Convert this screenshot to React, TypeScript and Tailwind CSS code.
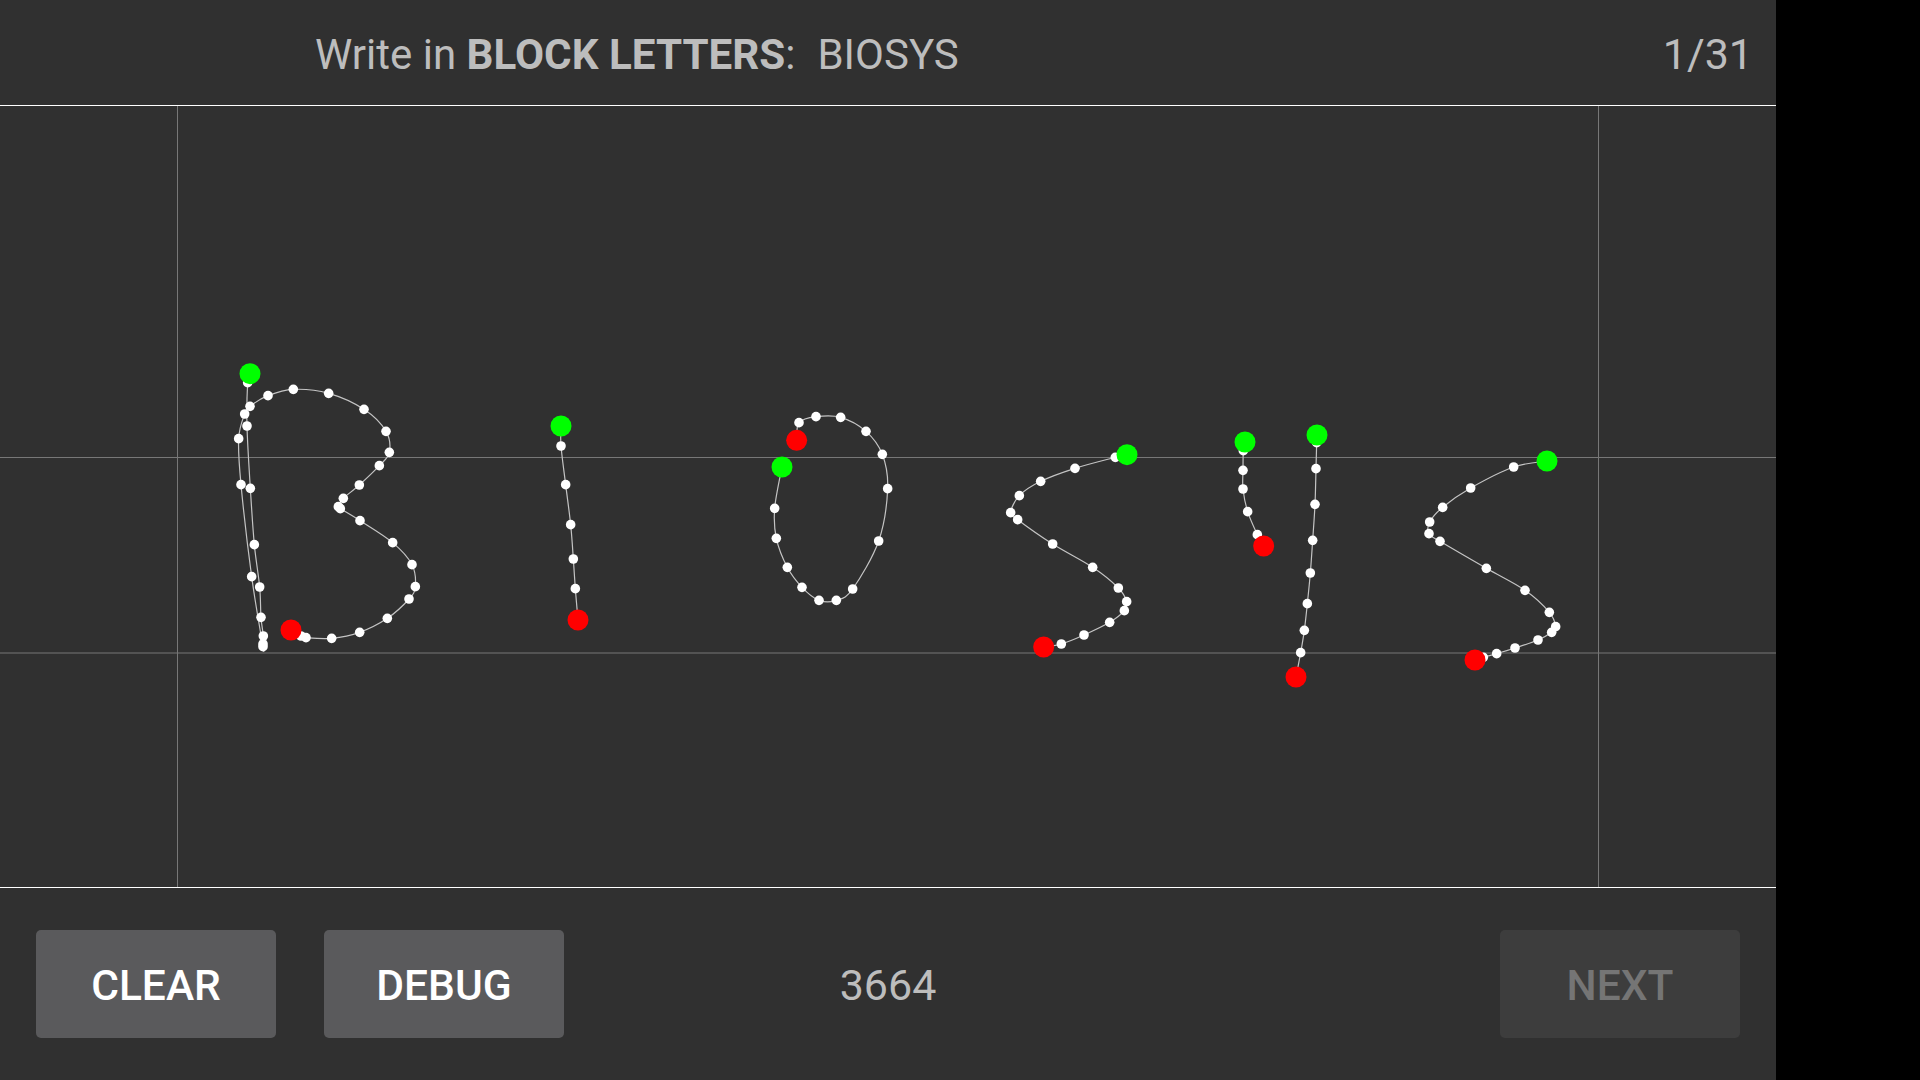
const strokes = [
  // B
  {
    ox: 200,
    oy: 340,
    pts: [
      [150, 101], [143, 128], [141, 258], [151, 445], [163, 614], [179, 741], [183, 832], [190, 888], [189, 912], [189, 920],
      [155, 710], [123, 434], [116, 296], [134, 222], [150, 199], [204, 167], [280, 148], [386, 160], [492, 208], [558, 274],
      [568, 337], [538, 377], [478, 435], [430, 475], [415, 500], [421, 506], [480, 542], [578, 608], [636, 674], [646, 740],
      [627, 777], [562, 835], [479, 877], [395, 895], [318, 893], [303, 888], [273, 870],
    ],
  },
  // I
  { ox: 530, oy: 390, pts: [[93, 108], [93, 168], [107, 284], [122, 404], [130, 507], [136, 596], [144, 690]] },
  // O
  {
    ox: 530,
    oy: 390,
    pts: [
      [756, 231], [734, 355], [739, 445], [772, 532], [816, 592], [867, 631], [919, 631], [968, 597], [1046, 453], [1073, 296],
      [1057, 193], [1008, 124], [932, 82], [858, 80], [807, 98], [800, 151],
    ],
  },
  // S
  {
    ox: 980,
    oy: 420,
    pts: [
      [441, 104], [406, 112], [285, 145], [182, 184], [118, 227], [92, 278], [113, 299], [218, 372], [338, 442], [415, 504],
      [440, 545], [433, 572], [389, 607], [312, 645], [244, 672], [191, 681],
    ],
  },
  // Y
  { ox: 1200, oy: 410, pts: [[135, 96], [130, 122], [129, 181], [129, 237], [143, 305], [172, 374], [191, 408]] },
  {
    ox: 1200,
    oy: 410,
    pts: [[351, 75], [350, 98], [348, 176], [345, 283], [338, 391], [331, 489], [322, 581], [313, 661], [302, 728], [288, 801]],
  },
  // S
  {
    ox: 1200,
    oy: 410,
    pts: [
      [1041, 153], [941, 171], [812, 234], [728, 292], [689, 336], [687, 371], [720, 394], [859, 475], [975, 541], [1048, 607],
      [1067, 650], [1055, 667], [1014, 690], [945, 714], [890, 731], [850, 742], [825, 750],
    ],
  },
].map((s) => s.pts.map(([x, y]) => [s.ox + x / 3, s.oy + y / 3]));

// catmull-rom through the sampled points
const toPath = (p: number[][]) => {
  let d = `M${p[0][0]} ${p[0][1]}`;
  for (let i = 0; i < p.length - 1; i++) {
    const a = p[Math.max(i - 1, 0)];
    const b = p[i];
    const c = p[i + 1];
    const e = p[Math.min(i + 2, p.length - 1)];
    d += ` C${b[0] + (c[0] - a[0]) / 6} ${b[1] + (c[1] - a[1]) / 6} ${c[0] - (e[0] - b[0]) / 6} ${c[1] - (e[1] - b[1]) / 6} ${c[0]} ${c[1]}`;
  }
  return d;
};

const Button = ({ text, disabled }: { text: string; disabled?: boolean }) => (
  <div
    className={`w-[240px] h-[108px] pt-[4px] rounded-[5px] flex items-center justify-center text-[42.5px] font-medium ${
      disabled ? "bg-[#3d3d3d] text-[#757575]" : "bg-[#5a5a5c] text-white"
    }`}
  >
    {text}
  </div>
);

const App = () => {
  return (
    <div className="w-[1920px] h-[1080px] bg-black overflow-hidden font-['Roboto',sans-serif]">
      <div className="w-[1776px] h-full bg-[#303030] flex flex-col">
        <div className="h-[106px] shrink-0 border-b border-white pt-[4px] pl-[315px] pr-[23px] flex items-center justify-between text-[42px] text-[#bdbdbd]">
          <div className="flex">
            <span>
              Write in <b className="font-bold text-[42.2px]">BLOCK LETTERS</b>:
            </span>
            <span className="ml-[22px]">BIOSYS</span>
          </div>
          <span className="text-[43px]">1/31</span>
        </div>

        <div className="flex-1 min-h-0">
          <svg className="block w-full h-full" viewBox="0 106 1776 781">
            <g stroke="#777777" strokeWidth="1" fill="none">
              <line x1="177.5" y1="106" x2="177.5" y2="887" />
              <line x1="1598.5" y1="106" x2="1598.5" y2="887" />
              <line x1="0" y1="457.5" x2="1776" y2="457.5" />
              <line x1="0" y1="653" x2="1776" y2="653" />
            </g>
            {strokes.map((p, i) => (
              <g key={i}>
                <path d={toPath(p)} fill="none" stroke="#c4c4c4" strokeWidth="1.2" />
                {p.slice(1, -1).map(([x, y], j) => (
                  <circle key={j} cx={x} cy={y} r="4.8" fill="#ffffff" />
                ))}
                <circle cx={p[0][0]} cy={p[0][1]} r="10.5" fill="#00ff00" />
                <circle cx={p[p.length - 1][0]} cy={p[p.length - 1][1]} r="10.5" fill="#ff0000" />
              </g>
            ))}
          </svg>
        </div>

        <div className="h-[193px] shrink-0 border-t border-white px-[36px] flex items-center">
          <div className="flex-1 flex gap-12">
            <Button text="CLEAR" />
            <Button text="DEBUG" />
          </div>
          <span className="pt-[2px] text-[43px] text-[#bdbdbd]">3664</span>
          <div className="flex-1 flex justify-end">
            <Button text="NEXT" disabled />
          </div>
        </div>
      </div>
    </div>
  );
};

export default App;
